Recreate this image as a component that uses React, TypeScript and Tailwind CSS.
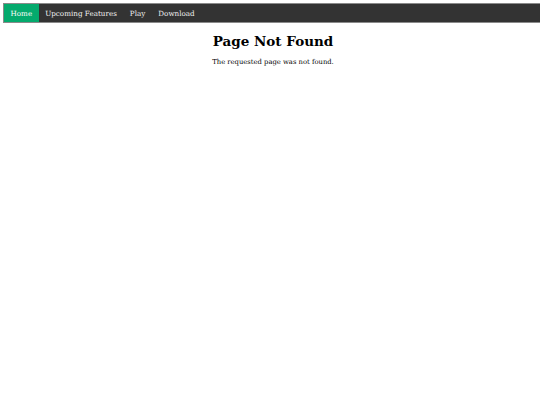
const links = ['Home', 'Upcoming Features', 'Play', 'Download']

export default function App() {
  return (
    <div className="min-h-[405px] overflow-hidden bg-white pt-[3px] font-['DejaVu_Serif',serif]">
      <div className="ml-[3px] w-[540px]">
        <nav className="flex h-[20px] border border-[#8a8a8a] bg-[#333333]">
          {links.map((link, i) => (
            <a
              key={link}
              href="#"
              className={`flex items-center px-[6.5px] pt-[1px] text-[7.2px] leading-none text-[#f2f2f2] ${
                i === 0 ? 'bg-[#04aa6d] text-white' : ''
              }`}
            >
              {link}
            </a>
          ))}
        </nav>
        <div className="text-center">
          <h1 className="mt-[10px] text-[13.5px] font-bold leading-tight text-black">Page Not Found</h1>
          <p className="mt-[7px] text-[6.8px] text-black">The requested page was not found.</p>
        </div>
      </div>
    </div>
  )
}
